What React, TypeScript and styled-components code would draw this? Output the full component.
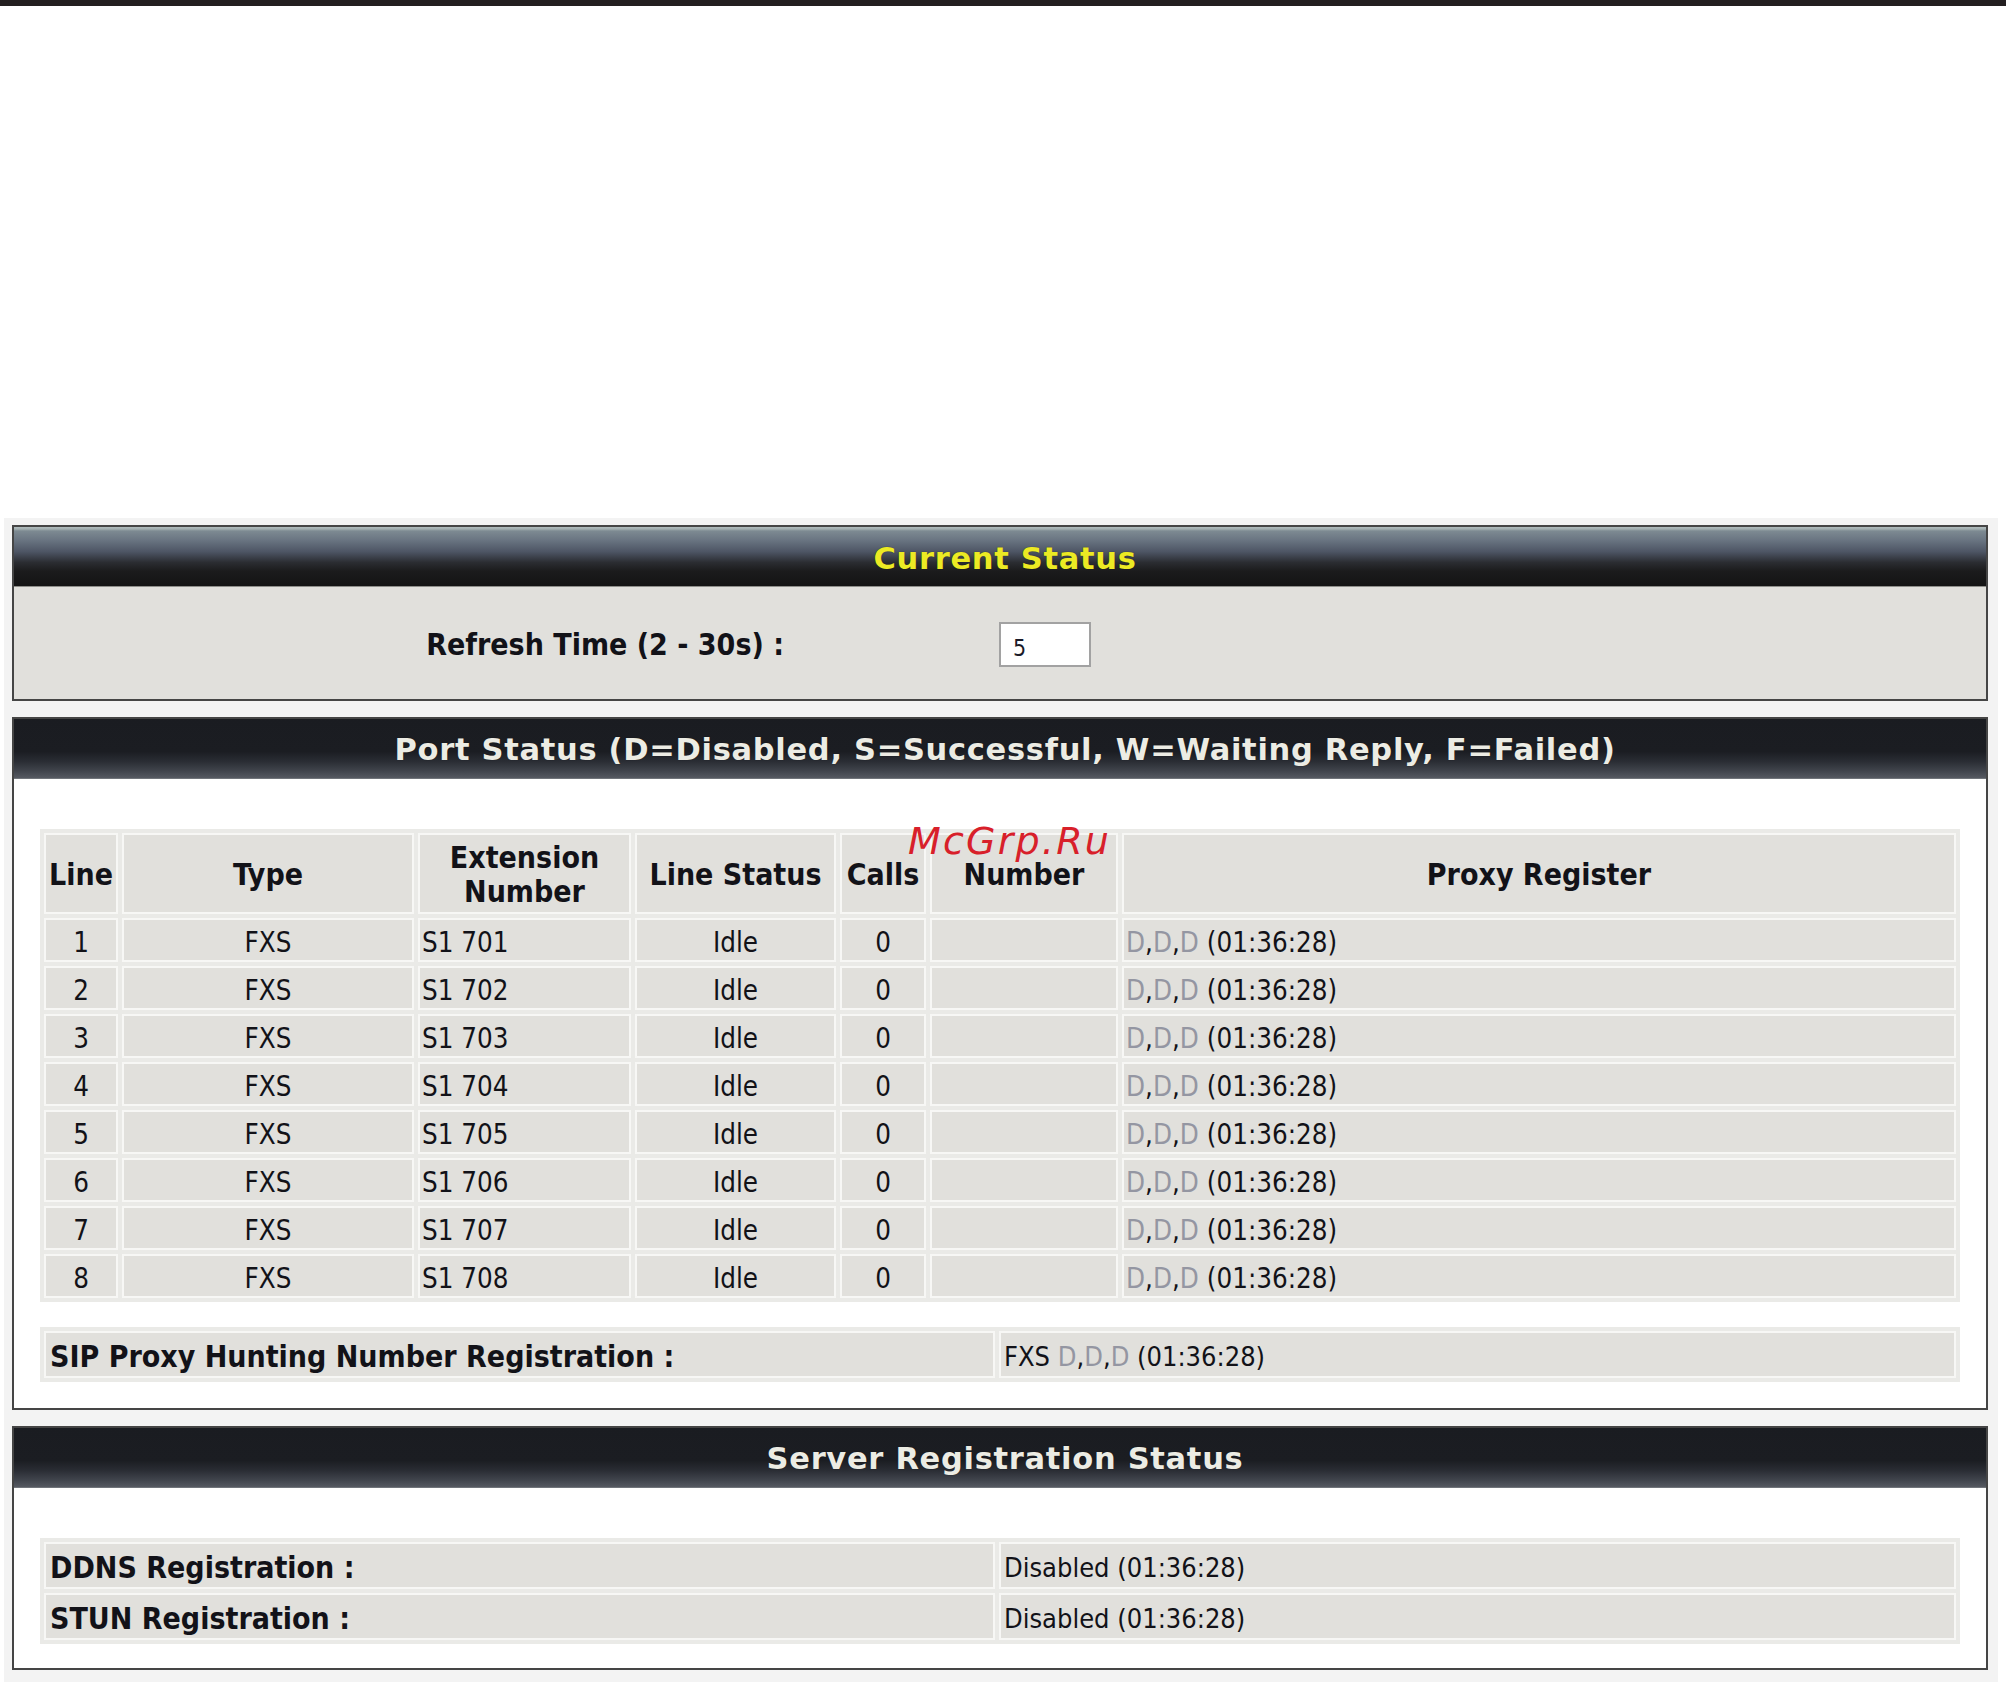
import React from 'react';
import styled, { createGlobalStyle } from 'styled-components';

const GlobalStyle = createGlobalStyle`
  * { box-sizing: border-box; }
  html, body { margin: 0; padding: 0; background: #ffffff; }
  body {
    font-family: "DejaVu Sans Condensed", "DejaVu Sans", sans-serif;
    font-stretch: condensed;
    color: #121218;
  }
`;

const Page = styled.div`
  position: relative;
  width: 2006px;
  min-height: 1682px;
  background: #ffffff;
`;

const TopBar = styled.div`
  height: 6px;
  background: #231f20;
`;

const Blank = styled.div`
  height: 512px;
`;

const Stage = styled.div`
  margin-left: 4px;
  width: 1994px;
  background: #f3f3f3;
  padding: 7px 10px 12px 8px;
  display: flex;
  flex-direction: column;
  gap: 16px;
`;

const Panel = styled.section<{ $light?: boolean }>`
  border: 2px solid #454545;
  background: ${(p) => (p.$light ? '#e1e0dc' : '#ffffff')};
`;

const PanelHeader = styled.div<{ $glossy?: boolean }>`
  height: 60px;
  padding-top: ${(p) => (p.$glossy ? 4 : 2)}px;
  padding-left: 10px;
  display: flex;
  align-items: center;
  justify-content: center;
  font-family: "DejaVu Sans", sans-serif;
  font-stretch: normal;
  font-weight: bold;
  font-size: 30.5px;
  letter-spacing: 0.7px;
  color: ${(p) => (p.$glossy ? '#ecea24' : '#ececE4')};
  background: ${(p) =>
    p.$glossy
      ? 'linear-gradient(to bottom, #b1bcbd 0px, #a3afb1 2px, #7d8a92 4px, #6a7582 22%, #4d5564 42%, #2b2d32 60%, #1b1b1c 75%, #141414 100%)'
      : 'linear-gradient(to bottom, #1a1c21 0%, #1b1d22 55%, #2a2d34 72%, #40444c 88%, #555961 100%)'};
  border-bottom: 1px solid ${(p) => (p.$glossy ? '#8e8e8a' : '#70747a')};
  text-shadow: 0 0 1px rgba(0, 0, 0, 0.6);
`;

const RefreshBody = styled.div`
  height: 112px;
  display: grid;
  grid-template-columns: 1fr 1fr;
  align-items: center;
`;

const RefreshLabel = styled.div`
  justify-self: end;
  padding-right: 216px;
  padding-top: 2px;
  font-weight: bold;
  font-size: 30px;
`;

const RefreshInput = styled.input`
  width: 92px;
  height: 45px;
  margin-left: -1px;
  margin-top: 2px;
  border: 2px solid #a2a2a2;
  background: #ffffff;
  padding: 7px 0 0 12px;
  font-family: "DejaVu Sans Condensed", "DejaVu Sans", sans-serif;
  font-stretch: condensed;
  font-size: 23px;
  color: #1a1a28;
  outline: none;
`;

const PanelBody = styled.div<{ $bottom: number }>`
  padding: 50px 0 ${(p) => p.$bottom}px;
  display: flex;
  flex-direction: column;
  gap: 25px;
`;

const PortGrid = styled.div`
  width: 1920px;
  margin: 0 auto;
  display: grid;
  grid-template-columns: 74px 292px 213px 201px 86px 188px 1fr;
  grid-template-rows: 81px;
  grid-auto-rows: 44px;
  gap: 4px;
  padding: 4px;
  background: #eaeae7;
`;

const KVGrid = styled.div`
  width: 1920px;
  margin: 0 auto;
  display: grid;
  grid-template-columns: 951px 1fr;
  grid-auto-rows: 47px;
  gap: 4px;
  padding: 4px;
  background: #eaeae7;
`;

const Cell = styled.div<{ $align?: 'left' | 'center' }>`
  background: #e1e0dc;
  border: 2px solid #f7f7f5;
  display: flex;
  align-items: center;
  justify-content: ${(p) => (p.$align === 'center' ? 'center' : 'flex-start')};
  padding: 3px 2px 0;
  font-size: 27.5px;
  white-space: nowrap;
`;

const HeadCell = styled(Cell)`
  justify-content: center;
  text-align: center;
  font-weight: bold;
  font-size: 30px;
  line-height: 34px;
  white-space: normal;
`;

const LabelCell = styled(Cell)`
  padding-left: 4px;
  font-weight: bold;
  font-size: 30px;
`;

const ValueCell = styled(Cell)`
  padding-left: 3px;
  font-size: 27px;
`;

const Dim = styled.span`
  color: #9496a2;
`;

const Watermark = styled.div`
  position: absolute;
  left: 908px;
  top: 822px;
  font-family: "DejaVu Sans", sans-serif;
  font-stretch: normal;
  font-style: italic;
  font-size: 38px;
  line-height: 1;
  letter-spacing: 2.2px;
  color: #d8202a;
  pointer-events: none;
`;

const DDD = () => (
  <>
    <Dim>D</Dim>,<Dim>D</Dim>,<Dim>D</Dim>
  </>
);

const lines = [1, 2, 3, 4, 5, 6, 7, 8];

export default function App() {
  return (
    <Page>
      <GlobalStyle />
      <TopBar />
      <Blank />
      <Stage>
        <Panel $light>
          <PanelHeader $glossy>Current Status</PanelHeader>
          <RefreshBody>
            <RefreshLabel>Refresh Time (2 - 30s) :</RefreshLabel>
            <div>
              <RefreshInput defaultValue="5" readOnly />
            </div>
          </RefreshBody>
        </Panel>

        <Panel>
          <PanelHeader>
            Port Status (D=Disabled, S=Successful, W=Waiting Reply, F=Failed)
          </PanelHeader>
          <PanelBody $bottom={26}>
            <PortGrid>
              <HeadCell>Line</HeadCell>
              <HeadCell>Type</HeadCell>
              <HeadCell>
                Extension
                <br />
                Number
              </HeadCell>
              <HeadCell>Line Status</HeadCell>
              <HeadCell>Calls</HeadCell>
              <HeadCell>Number</HeadCell>
              <HeadCell>Proxy Register</HeadCell>
              {lines.map((n) => (
                <React.Fragment key={n}>
                  <Cell $align="center">{n}</Cell>
                  <Cell $align="center">FXS</Cell>
                  <Cell>S1 70{n}</Cell>
                  <Cell $align="center">Idle</Cell>
                  <Cell $align="center">0</Cell>
                  <Cell />
                  <Cell>
                    <span>
                      <DDD /> (01:36:28)
                    </span>
                  </Cell>
                </React.Fragment>
              ))}
            </PortGrid>
            <KVGrid>
              <LabelCell>SIP Proxy Hunting Number Registration :</LabelCell>
              <ValueCell>
                <span>
                  FXS <DDD /> (01:36:28)
                </span>
              </ValueCell>
            </KVGrid>
          </PanelBody>
        </Panel>

        <Panel>
          <PanelHeader>Server Registration Status</PanelHeader>
          <PanelBody $bottom={24}>
            <KVGrid>
              <LabelCell>DDNS Registration :</LabelCell>
              <ValueCell>Disabled (01:36:28)</ValueCell>
              <LabelCell>STUN Registration :</LabelCell>
              <ValueCell>Disabled (01:36:28)</ValueCell>
            </KVGrid>
          </PanelBody>
        </Panel>
      </Stage>
      <Watermark>McGrp.Ru</Watermark>
    </Page>
  );
}
